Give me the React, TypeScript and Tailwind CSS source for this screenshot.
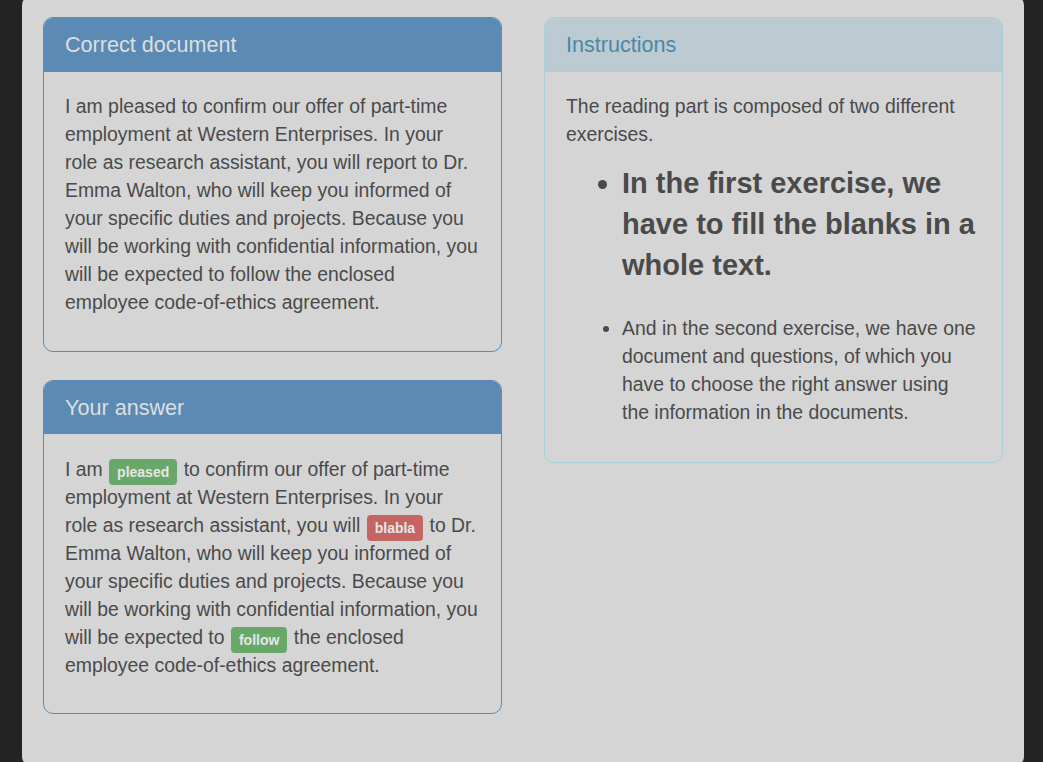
import React from "react";

const Badge = ({ text, color }: { text: string; color: "green" | "red" }) => (
  <span
    className={`relative top-[1px] inline-block align-middle rounded-[4px] px-[8px] h-[26px] -my-[4px] leading-[27px] text-[14px] font-bold text-[#e6e6e6] mx-[1px] ${
      color === "green" ? "bg-[#68a96a]" : "bg-[#c46563]"
    }`}
  >
    {text}
  </span>
);

export default function App() {
  return (
    <div
      className="min-h-[762px] w-full bg-[#232323] overflow-hidden"
      style={{ fontFamily: '"Liberation Sans", Arial, sans-serif' }}
    >
      <div className="ml-[22px] mt-[-4px] w-[1002px] h-[770px] rounded-[9px] bg-[#d5d5d5] px-[21px] pt-[21px]">
        <div className="grid grid-cols-2 gap-[42px] items-start text-[19.4px] leading-[28px] text-[#4a4a4a]">
          <div className="flex flex-col gap-[28px]">
            <div className="rounded-[10px] border border-[#5b8bb5] overflow-hidden">
              <div className="bg-[#5b8bb5] h-[54px] px-[21px] flex items-center text-[21.6px] text-[#dedede]">
                Correct document
              </div>
              <div className="px-[21px] pt-[20px] pb-[35px]">
                I am pleased to confirm our offer of part-time employment at Western Enterprises. In your
                role as research assistant, you will report to Dr. Emma Walton, who will keep you informed of
                your specific duties and projects. Because you will be working with confidential information, you
                will be expected to follow the enclosed employee code-of-ethics agreement.
              </div>
            </div>
            <div className="rounded-[10px] border border-[#5b8bb5] overflow-hidden">
              <div className="bg-[#5b8bb5] h-[53px] px-[21px] flex items-center text-[21.6px] text-[#dedede]">
                Your answer
              </div>
              <div className="px-[21px] pt-[21px] pb-[34px]">
                I am <Badge text="pleased" color="green" /> to confirm our offer of part-time employment at
                Western Enterprises. In your role as research assistant, you will{" "}
                <Badge text="blabla" color="red" /> to Dr. Emma Walton, who will keep you informed of your
                specific duties and projects. Because you will be working with confidential information, you
                will be expected to <Badge text="follow" color="green" /> the enclosed employee
                code-of-ethics agreement.
              </div>
            </div>
          </div>
          <div className="rounded-[10px] border border-[#a9cfd9] overflow-hidden">
            <div className="bg-[#bccbd2] h-[54px] px-[21px] flex items-center text-[21.6px] text-[#4c87a5] border-b border-[#a9cfd9]">
              Instructions
            </div>
            <div className="px-[21px] pt-[20px] pb-[36px]">
              <p>The reading part is composed of two different exercises.</p>
              <ul className="list-disc pl-[56px] mt-[15px] marker:text-[#4a4a4a]">
                <li className="text-[29px] leading-[41px] font-bold">
                  In the first exercise, we have to fill the blanks in a whole text.
                </li>
                <li className="mt-[28px] pr-[3px]">
                  And in the second exercise, we have one document and questions, of which you have to choose
                  the right answer using the information in the documents.
                </li>
              </ul>
            </div>
          </div>
        </div>
      </div>
    </div>
  );
}
